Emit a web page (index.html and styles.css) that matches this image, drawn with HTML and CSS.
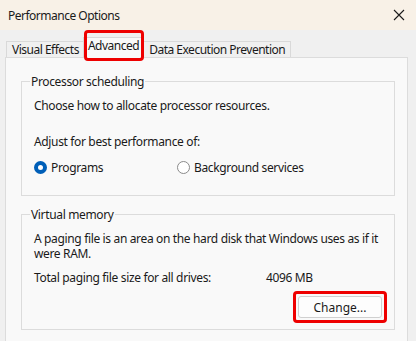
FILE: index.html
```html
<!DOCTYPE html>
<html>
<head>
<meta charset="utf-8">
<link rel="stylesheet" href="styles.css">
</head>
<body>
<div class="window">
  <div class="titlebar">
    <span class="title">Performance Options</span>
    <svg class="close" width="12" height="12" viewBox="0 0 12 12"><path d="M1 1 L11 11 M11 1 L1 11" stroke="#1a1a1a" stroke-width="1.1" fill="none"/></svg>
  </div>
  <div class="content">
    <div class="tabs">
      <div class="tab">Visual Effects</div>
      <div class="tab active">Advanced<span class="mark mark-tab"></span></div>
      <div class="tab">Data Execution Prevention</div>
    </div>
    <div class="panel">
      <fieldset class="group g1">
        <legend>Processor scheduling</legend>
        <p class="line first">Choose how to allocate processor resources.</p>
        <p class="line adjust">Adjust for best performance of:</p>
        <div class="radios">
          <label class="radio r1"><span class="dot on"></span>Programs</label>
          <label class="radio"><span class="dot"></span>Background services</label>
        </div>
      </fieldset>
      <fieldset class="group g2">
        <legend>Virtual memory</legend>
        <p class="line para">A paging file is an area on the hard disk that Windows uses as if it were RAM.</p>
        <div class="total"><span class="tl">Total paging file size for all drives:</span><span>4096 MB</span></div>
        <div class="btnrow"><button class="btn">Change...<span class="mark mark-btn"></span></button></div>
      </fieldset>
    </div>
  </div>
</div>
</body>
</html>
```
FILE: styles.css
```css
* { box-sizing: border-box; }
html, body { margin: 0; padding: 0; }
body {
  width: 416px; height: 341px; overflow: hidden;
  font-family: "Noto Sans", "Open Sans", sans-serif;
  font-size: 12px; letter-spacing: -0.35px; color: #1a1a1a;
  background: #f0f0f0;
}
.titlebar {
  height: 30px; background: #f8f1e7;
  display: flex; align-items: center; justify-content: space-between;
  padding: 0 11px 0 8px;
}
.title { letter-spacing: -0.5px; }
.content { padding: 7px 8px 0 5px; }
.tabs { display: flex; align-items: flex-end; height: 20px; padding-left: 1px; letter-spacing: -0.5px; }
.tab {
  height: 16px; line-height: 15px; padding: 0 5px;
  border: 1px solid #d9d9d9; border-bottom: none;
  background: #f0f0f0; margin-right: -1px;
}
.tab.active {
  position: relative; height: 21px; line-height: 16px;
  background: #f9f9f9; margin: 0 0 -1px -1px; z-index: 1;
  padding: 0 3px 0 4px;
}
.mark { position: absolute; border: 3px solid #ee0000; border-radius: 4px; pointer-events: none; }
.mark-tab { left: 0; top: -8px; right: -2px; bottom: -3px; }
.panel {
  background: #f9f9f9; border: 1px solid #dcdcdc;
  height: 290px; padding: 15px 12px 0 15px;
}
.group {
  margin: 0; border: 1px solid #dcdcdc; padding: 0 12px;
}
.group legend { padding: 0 1px; margin-left: -4px; }
.line { margin: 0; }
.g1 { height: 123px; }
.first { margin-top: 7px; }
.adjust { margin-top: 19px; }
.radios { display: flex; margin-top: 9px; }
.radio { display: flex; align-items: center; }
.r1 { width: 143px; }
.dot {
  width: 13px; height: 13px; border-radius: 50%;
  border: 1px solid #8a8a8a; background: #fff; margin-right: 4px;
}
.dot.on { border: 4px solid #005fb8; background: #fff; }
.g2 { height: 124px; margin-top: 10px; }
.para { margin-top: 8px; line-height: 15px; padding-right: 0; margin-right: -4px; }
.total { display: flex; margin-top: 8px; }
.tl { width: 232px; }
.btnrow { display: flex; justify-content: flex-end; margin-top: 10px; }
.btn {
  position: relative; width: 84px; height: 22px;
  font: inherit; color: #1a1a1a; background: #fdfdfd;
  border: 1px solid #d0d0d0; border-radius: 3px;
}
.mark-btn { left: -6px; top: -6px; right: -6px; bottom: -6px; }
```
